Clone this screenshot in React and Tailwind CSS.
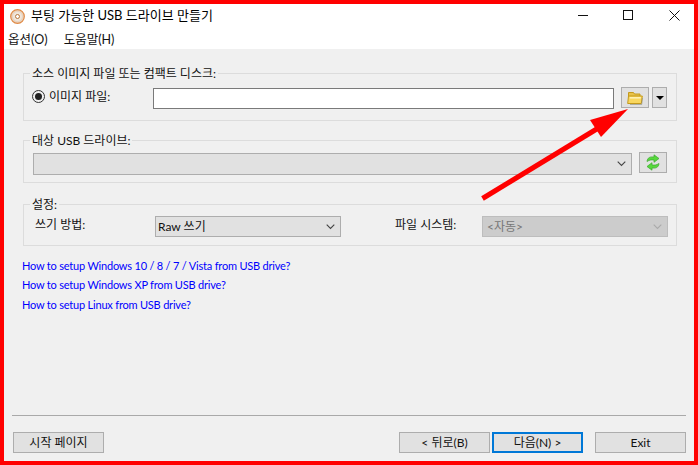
const font = "font-['Lato','Noto_Sans_CJK_KR',sans-serif]";

function Chevron({ color = "#444" }) {
  return (
    <svg width="9" height="6" viewBox="0 0 9 6" className="shrink-0">
      <path d="M.7.700l3.800 3.800L8.300.7" fill="none" stroke={color} strokeWidth="1.1" />
    </svg>
  );
}

function Select({ className, text, muted }) {
  return (
    <div className={`flex items-center justify-between border pr-[5px] text-[12px] leading-none ${muted ? "pl-[4px]" : "pl-[2px]"} ${className}`}>
      <span className={muted ? "text-[#777]" : "text-[#111]"}>{text}</span>
      <Chevron color={muted ? "#aaa" : "#444"} />
    </div>
  );
}

function Group({ title, className, children }) {
  return (
    <fieldset className={`border border-[#dcdcdc] ${className}`}>
      <legend className="ml-[6px] bg-[#f0f0f0] px-[2px] text-[12px] leading-[17px] text-[#111]">{title}</legend>
      {children}
    </fieldset>
  );
}

function Button({ children, className = "border border-[#adadad]" }) {
  return (
    <button className={`flex h-[21px] w-[91px] items-center justify-center bg-[#e1e1e1] text-[12px] leading-none text-[#111] ${className}`}>
      {children}
    </button>
  );
}

function DiscIcon() {
  return (
    <svg width="15" height="15" viewBox="0 0 15 15">
      <circle cx="7.500" cy="7.500" r="6.800" fill="#e8d3c0" stroke="#e08a45" strokeWidth="1.200" />
      <circle cx="7.500" cy="7.500" r="4.500" fill="#efe6dc" />
      <circle cx="7.500" cy="7.500" r="2" fill="#fff" stroke="#b9773f" strokeWidth="1" />
    </svg>
  );
}

function FolderIcon() {
  return (
    <svg width="16" height="14" viewBox="0 0 16 14">
      <path d="M1.500 6V1.500h5l1 1.500h5.500v3z" fill="#e8c24a" stroke="#c49a1c" strokeWidth="1" />
      <path d="M.7 12.500 1.500 5h13.800l-1 7.500z" fill="#f9d75f" stroke="#c49a1c" strokeWidth="1" />
      <path d="M2.800 6.800h11" stroke="#fff3b8" strokeWidth="1.500" />
      <path d="M15.500 7l-.8 6.500H3" stroke="#8a8a7a" strokeWidth="1" fill="none" opacity=".6" />
    </svg>
  );
}

function RefreshIcon() {
  return (
    <svg width="14" height="17" viewBox="0 0 14 17">
      <path d="M1 7.500C1.500 3.500 4 2.500 8 3V.8L13 4.500 8 8.300V6C5 5.700 3.500 6 1 7.500z" fill="#56d83c" stroke="#3aa82c" strokeWidth=".7" />
      <path d="M13 9.500C12.500 13.500 10 14.500 6 14v2.200L1 12.500 6 8.700V11C9 11.300 10.500 11 13 9.500z" fill="#56d83c" stroke="#3aa82c" strokeWidth=".7" />
    </svg>
  );
}

function WindowControls() {
  return (
    <div className="ml-auto flex items-center self-stretch pb-[2px]">
      <div className="flex w-[38px] justify-center">
        <svg width="10" height="10" viewBox="0 0 10 10"><path d="M0 5.500h10" stroke="#111" strokeWidth="1" /></svg>
      </div>
      <div className="flex w-[52px] justify-center">
        <svg width="10" height="10" viewBox="0 0 10 10"><rect x=".5" y=".5" width="9" height="9" fill="none" stroke="#111" strokeWidth="1" /></svg>
      </div>
      <div className="flex w-[40px] justify-center">
        <svg width="11" height="11" viewBox="0 0 11 11"><path d="M.5.5l10 10M10.500.5l-10 10" stroke="#111" strokeWidth="1" /></svg>
      </div>
    </div>
  );
}

export default function App() {
  return (
    <div className={`relative flex h-[465px] w-[698px] flex-col border-4 border-[#ff0000] bg-[#f0f0f0] ${font}`}>
      <div className="bg-white">
        <div className="flex h-[24px] items-center">
          <div className="ml-[6px] mr-[6px] flex"><DiscIcon /></div>
          <span className="pb-[2px] text-[13px] leading-none text-black">부팅 가능한 USB 드라이브 만들기</span>
          <WindowControls />
        </div>
        <div className="flex h-[21px] items-center gap-[16px] pl-[4px] pt-[4px] text-[12.500px] leading-none text-[#111]">
          <span>옵션(O)</span>
          <span>도움말(H)</span>
        </div>
      </div>

      <div className="flex flex-1 flex-col px-[8px]">
        <div className="flex flex-col pl-[11px] pr-[9px] pt-[16px]">
          <Group title="소스 이미지 파일 또는 컴팩트 디스크:" className="h-[56px] w-[654px]">
            <div className="flex items-start pl-[8px] pt-[5px]">
              <span className="mt-[3px] flex h-[13px] w-[13px] items-center justify-center rounded-full border border-[#333]">
                <span className="h-[7px] w-[7px] rounded-full bg-[#222]" />
              </span>
              <span className="ml-[4px] mt-[2px] w-[104px] text-[12px] leading-[16px] text-[#111]">이미지 파일:</span>
              <div className="mt-[1px] h-[21px] w-[461px] border border-[#7a7a7a] bg-white" />
              <div className="ml-[7px] flex h-[21px] w-[28px] items-center justify-center border border-[#adadad] bg-[#e1e1e1]"><FolderIcon /></div>
              <div className="ml-[3px] flex h-[21px] w-[15px] items-center justify-center border border-[#adadad] bg-[#e1e1e1]">
                <span className="h-0 w-0 border-x-[4px] border-t-[4px] border-x-transparent border-t-black" />
              </div>
            </div>
          </Group>

          <Group title="대상 USB 드라이브:" className="mt-[11px] h-[51px] w-[654px]">
            <div className="flex items-start pl-[9px] pt-[3px]">
              <Select className="mt-[1px] h-[22px] w-[599px] border-[#adadad] bg-[#e1e1e1]" text="" />
              <div className="ml-[7px] flex h-[21px] w-[28px] items-center justify-center border border-[#adadad] bg-[#e1e1e1]"><RefreshIcon /></div>
            </div>
          </Group>

          <Group title="설정:" className="mt-[13px] h-[50px] w-[654px]">
            <div className="flex items-start pt-[3px] text-[12px] leading-[16px] text-[#111]">
              <span className="ml-[11px] mt-[1px] w-[120px]">쓰기 방법:</span>
              <Select className="h-[21px] w-[186px] border-[#adadad] bg-[#e1e1e1]" text="Raw 쓰기" />
              <span className="ml-[54px] mt-[1px] w-[87px]">파일 시스템:</span>
              <Select className="h-[21px] w-[186px] border-[#bdbdbd] bg-[#cccccc]" text="<자동>" muted />
            </div>
          </Group>
        </div>

        <div className="mt-[12px] flex flex-col gap-[3px] pl-[10px] text-[11px] leading-[16px] tracking-[-0.2px] text-[#0000ff]">
          <a>How to setup Windows 10 / 8 / 7 / Vista from USB drive?</a>
          <a>How to setup Windows XP from USB drive?</a>
          <a className="mt-[1px]">How to setup Linux from USB drive?</a>
        </div>

        <div className="mt-auto border-t border-[#a9a9a9]" />
        <div className="flex pb-[8px] pl-[1px] pt-[16px]">
          <Button>시작 페이지</Button>
          <div className="ml-auto flex">
            <Button>&lt; 뒤로(B)</Button>
            <Button className="ml-[2px] border-2 border-[#0078d7]">다음(N) &gt;</Button>
            <Button className="ml-[12px] border border-[#adadad]">Exit</Button>
          </div>
        </div>
      </div>

      <svg className="absolute -left-[4px] -top-[4px]" width="698" height="465" viewBox="0 0 698 465">
        <path d="M482.500 198.500 600 127" stroke="#ff0000" strokeWidth="5" />
        <polygon points="628,109 590,120 601,137" fill="#ff0000" />
      </svg>
    </div>
  );
}
